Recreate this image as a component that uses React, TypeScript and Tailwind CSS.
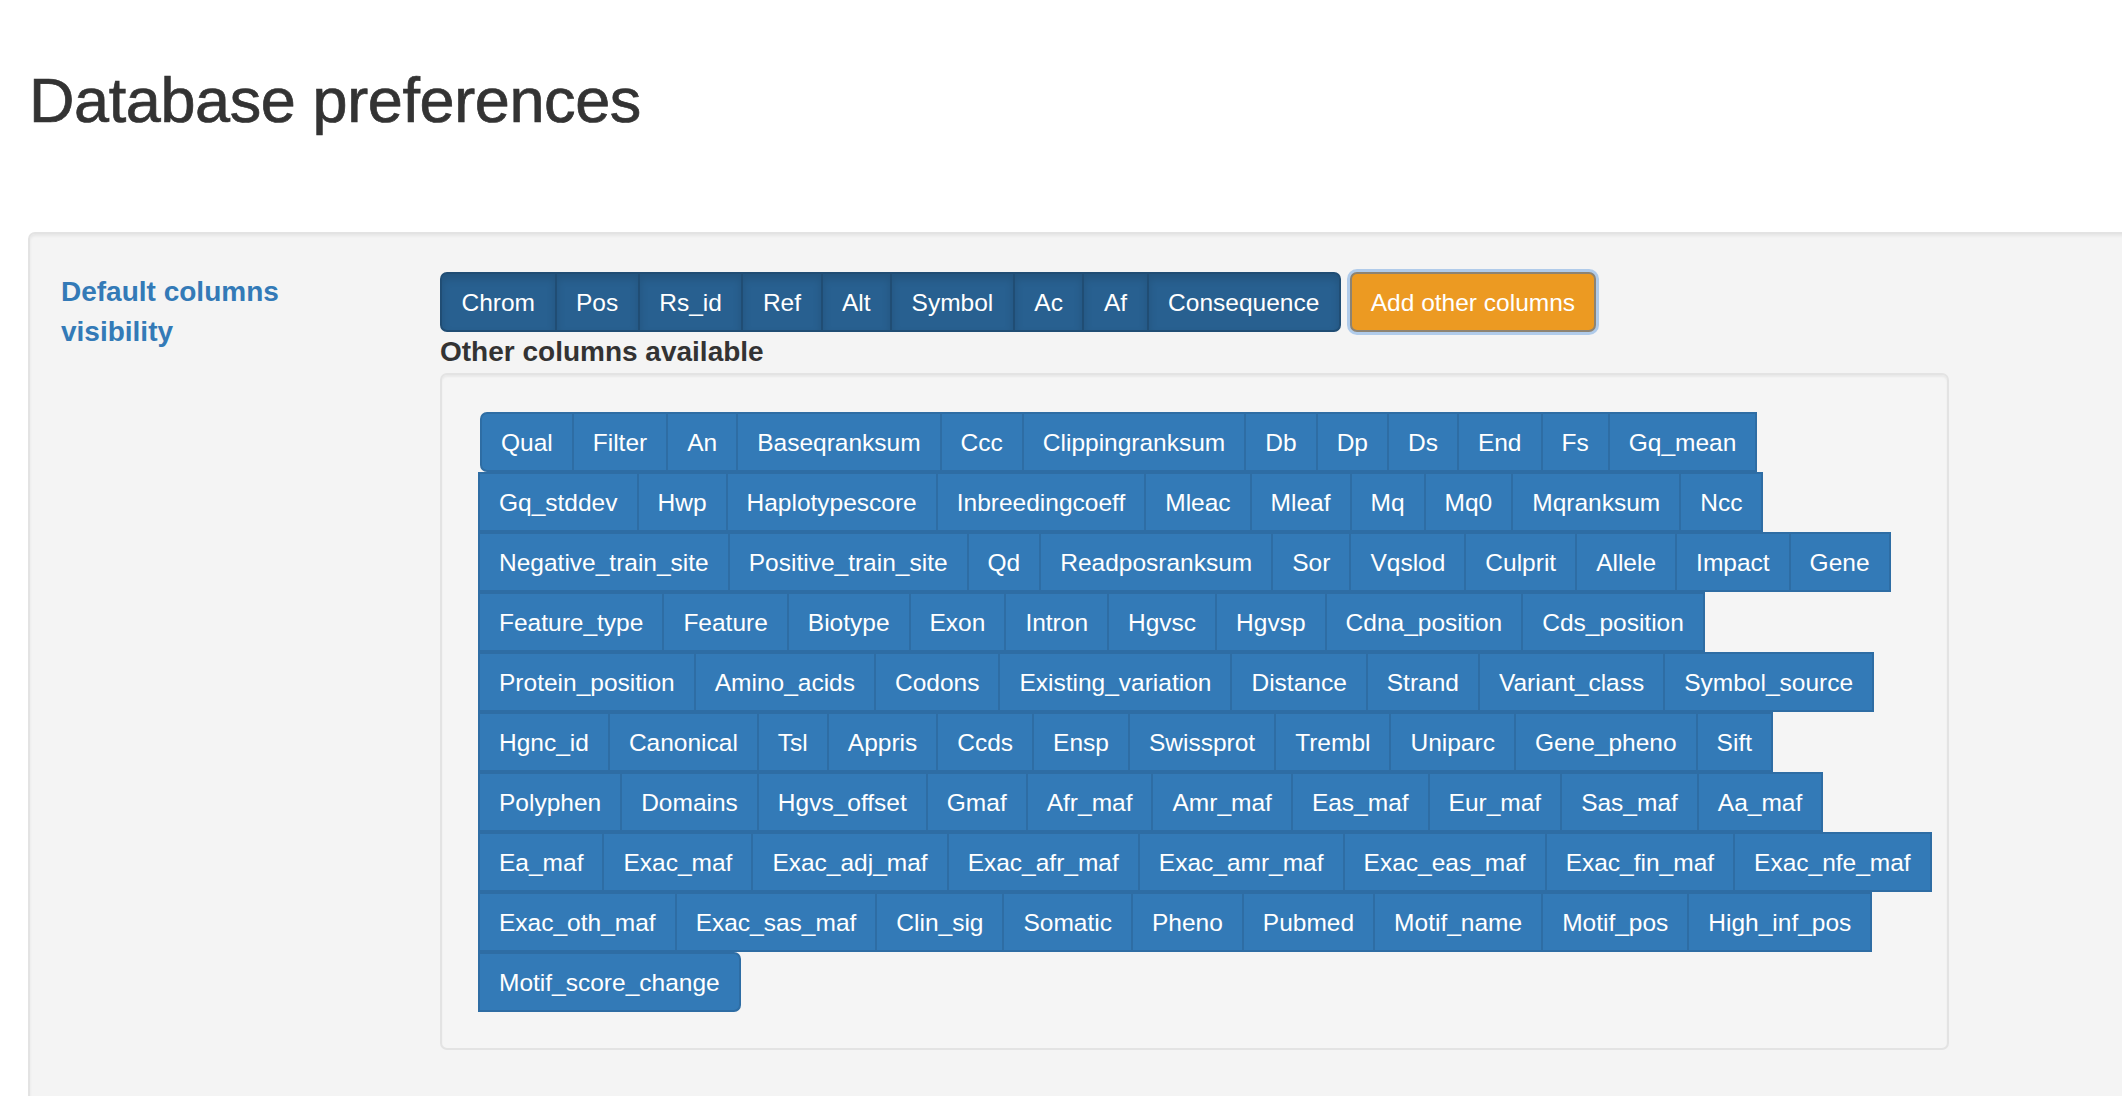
import React from "react";

const topCols = ["Chrom", "Pos", "Rs_id", "Ref", "Alt", "Symbol", "Ac", "Af", "Consequence"];

const rows: string[][] = [
  ["Qual", "Filter", "An", "Baseqranksum", "Ccc", "Clippingranksum", "Db", "Dp", "Ds", "End", "Fs", "Gq_mean"],
  ["Gq_stddev", "Hwp", "Haplotypescore", "Inbreedingcoeff", "Mleac", "Mleaf", "Mq", "Mq0", "Mqranksum", "Ncc"],
  ["Negative_train_site", "Positive_train_site", "Qd", "Readposranksum", "Sor", "Vqslod", "Culprit", "Allele", "Impact", "Gene"],
  ["Feature_type", "Feature", "Biotype", "Exon", "Intron", "Hgvsc", "Hgvsp", "Cdna_position", "Cds_position"],
  ["Protein_position", "Amino_acids", "Codons", "Existing_variation", "Distance", "Strand", "Variant_class", "Symbol_source"],
  ["Hgnc_id", "Canonical", "Tsl", "Appris", "Ccds", "Ensp", "Swissprot", "Trembl", "Uniparc", "Gene_pheno", "Sift"],
  ["Polyphen", "Domains", "Hgvs_offset", "Gmaf", "Afr_maf", "Amr_maf", "Eas_maf", "Eur_maf", "Sas_maf", "Aa_maf"],
  ["Ea_maf", "Exac_maf", "Exac_adj_maf", "Exac_afr_maf", "Exac_amr_maf", "Exac_eas_maf", "Exac_fin_maf", "Exac_nfe_maf"],
  ["Exac_oth_maf", "Exac_sas_maf", "Clin_sig", "Somatic", "Pheno", "Pubmed", "Motif_name", "Motif_pos", "High_inf_pos"],
  ["Motif_score_change"],
];

export default function App() {
  return (
    <div className="h-screen w-full overflow-hidden bg-white font-['Liberation_Sans',Arial,sans-serif] text-[#333]">
      <div className="pl-[29px] pt-[66px]">
        <h1 className="text-[63px] leading-[69px] font-normal text-[#333] tracking-[-0.4px] [-webkit-text-stroke:0.7px_#333]">Database preferences</h1>
      </div>

      <div className="ml-[28px] mr-[-40px] mt-[97px] bg-[#f4f4f4] border-2 border-[#e3e3e3] rounded-[7px] shadow-[inset_0_2px_3px_rgba(0,0,0,0.06)] pt-[38px] pl-[31px] pb-[80px]">
        <div className="flex">
          <div className="w-[379px] shrink-0">
            <div className="w-[250px] text-[28px] leading-[40px] font-bold text-[#337ab7]">Default columns visibility</div>
          </div>
          <div className="flex flex-col">
            <div className="flex items-start">
              <div className="flex">
                {topCols.map((c, i) => (
                  <div
                    key={c}
                    className={
                      "h-[60px] flex items-center px-[19.5px] border-2 border-[#204d74] bg-[#286090] text-white text-[24.5px] leading-[35px] shadow-[inset_0_5px_9px_rgba(0,0,0,0.125)] " +
                      (i === 0 ? "rounded-l-[7px] " : "-ml-[2px] ") +
                      (i === topCols.length - 1 ? "rounded-r-[7px]" : "")
                    }
                  >
                    {c}
                  </div>
                ))}
              </div>
              <div className="ml-[9px] h-[60px] flex items-center px-[19px] border-2 border-[#8d8372] bg-[#ec9a22] text-white text-[24.5px] leading-[35px] rounded-[7px] shadow-[0_0_0_3px_rgba(120,170,225,0.55)]">
                Add other columns
              </div>
            </div>
            <div className="text-[28px] leading-[40px] font-bold text-[#333]">Other columns available</div>
            <div className="mt-[1px] w-[1509px] bg-[#f5f5f5] border-2 border-[#e3e3e3] rounded-[7px] shadow-[inset_0_2px_2px_rgba(0,0,0,0.05)] pt-[37px] pl-[38px] pb-[36px]">
              {rows.map((row, ri) => (
                <div key={ri} className="flex">
                  {row.map((c, ci) => {
                    const isFirst = ri === 0 && ci === 0;
                    const isLast = ri === rows.length - 1 && ci === row.length - 1;
                    return (
                      <div
                        key={c}
                        className={
                          "h-[60px] flex items-center px-[19px] border-2 border-[#2e6da4] bg-[#337ab7] text-white text-[24.5px] leading-[35px] " +
                          (isFirst ? "rounded-l-[7px] " : "-ml-[2px] ") +
                          (isLast ? "rounded-r-[7px]" : "")
                        }
                      >
                        {c}
                      </div>
                    );
                  })}
                </div>
              ))}
            </div>
          </div>
        </div>
      </div>
    </div>
  );
}
